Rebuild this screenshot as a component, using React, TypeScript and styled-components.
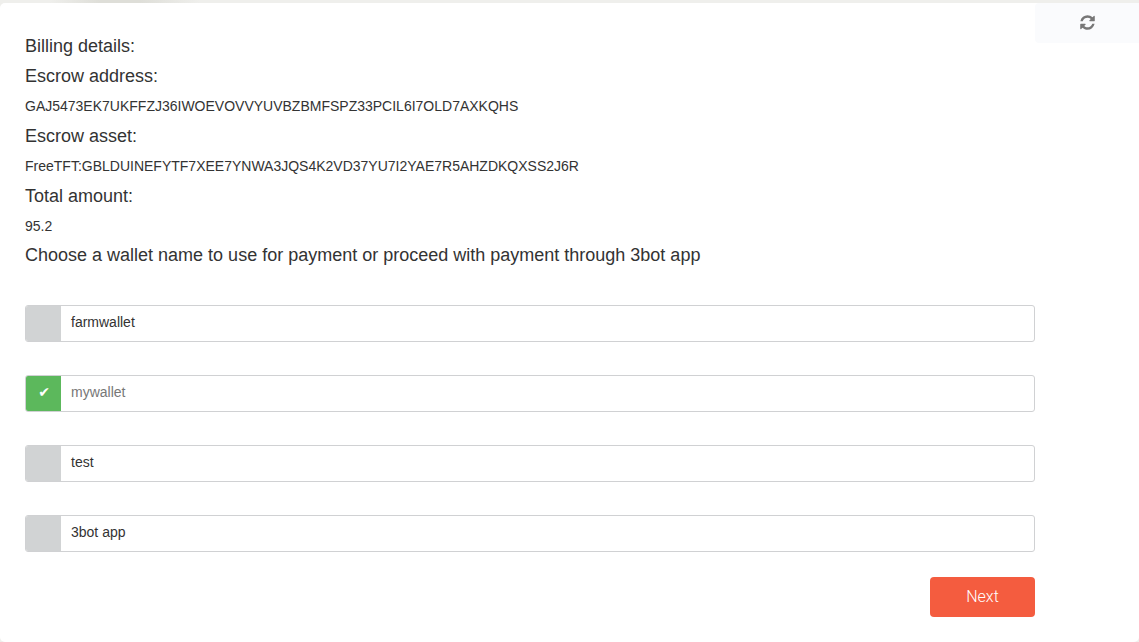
import React, { useState } from "react";
import styled, { createGlobalStyle } from "styled-components";

const GlobalStyle = createGlobalStyle`
  * { box-sizing: border-box; }
  body {
    margin: 0;
    background: #efefec;
    font-family: "Liberation Sans", Helvetica, Arial, sans-serif;
    color: #333333;
  }
`;

const Page = styled.div`
  padding-top: 3px;
  background: linear-gradient(90deg, #efefec 50px, #deded8 100px, #deded8 140px, #efefec 200px);
`;

const Card = styled.main`
  display: grid;
  grid-template-columns: minmax(0, 1fr) 104px;
  align-items: start;
  min-height: calc(100vh - 3px);
  padding-left: 25px;
  background: #ffffff;
  border-radius: 5px;
`;

const Form = styled.form`
  display: flex;
  flex-direction: column;
  padding: 28px 0 25px;
`;

const Details = styled.dl`
  margin: 0;
`;

const Term = styled.dt`
  font-size: 18px;
  line-height: 30px;
`;

const Value = styled.dd`
  margin: 0;
  font-size: 14px;
  line-height: 30px;
  overflow-wrap: anywhere;
`;

const Wallets = styled.fieldset`
  display: grid;
  gap: 33px;
  min-width: 0;
  margin: 0;
  padding: 0;
  border: 0;
`;

const Legend = styled.legend`
  margin-bottom: 36px;
  padding: 0;
  font-size: 18px;
  line-height: 28px;
`;

const Option = styled.label`
  display: flex;
  height: 37px;
  border: 1px solid #d0d1d3;
  border-radius: 3px;
  overflow: hidden;
  cursor: pointer;
`;

const Radio = styled.input`
  appearance: none;
  display: grid;
  place-items: center;
  flex: none;
  width: 35px;
  margin: 0;
  padding: 0 0 4px 1px;
  background: #d1d3d4;

  &:checked {
    background: #5cb85c;
  }

  &:checked::before {
    content: "✔";
    color: #ffffff;
    font: 14px/20px "DejaVu Sans", sans-serif;
  }
`;

const OptionName = styled.span<{ $selected: boolean }>`
  padding: 0 10px;
  font-size: 14px;
  line-height: 33px;
  color: ${(p) => (p.$selected ? "#777777" : "#333333")};
`;

const NextButton = styled.button`
  align-self: flex-end;
  width: 105px;
  height: 40px;
  margin-top: 25px;
  padding: 0;
  border: 0;
  border-radius: 4px;
  background: #f45c3f;
  color: #ffffff;
  font: 300 16px/40px Roboto, sans-serif;
  cursor: pointer;
`;

const RefreshButton = styled.button`
  display: flex;
  align-items: center;
  justify-content: center;
  height: 40px;
  padding: 0 0 2px;
  border: 0;
  border-radius: 4px 0 0 4px;
  background: #fafbfd;
  color: #777777;
  cursor: pointer;
`;

const RefreshIcon = () => (
  <svg width="17" height="17" viewBox="0 0 1792 1792" fill="currentColor" aria-hidden="true">
    <path d="M1639 1056q0 5-1 7-64 268-268 434.5t-478 166.5q-146 0-282.5-55t-243.5-157l-129 129q-19 19-45 19t-45-19-19-45v-448q0-26 19-45t45-19h448q26 0 45 19t19 45-19 45l-137 137q71 66 161 102t187 36q134 0 250-65t186-179q11-17 53-117 8-23 30-23h192q13 0 22.5 9.5t9.5 22.5zm25-800v448q0 26-19 45t-45 19h-448q-26 0-45-19t-19-45 19-45l138-138q-148-137-349-137-134 0-250 65t-186 179q-11 17-53 117-8 23-30 23h-199q-13 0-22.5-9.5t-9.5-22.5v-7q65-268 270-434.500t480-166.500q146 0 284 55.500t245 156.500l130-129q19-19 45-19t45 19 19 45z" />
  </svg>
);

const wallets = ["farmwallet", "mywallet", "test", "3bot app"];

export default function App() {
  const [selected, setSelected] = useState("mywallet");

  return (
    <Page>
      <GlobalStyle />
      <Card>
        <Form onSubmit={(e) => e.preventDefault()}>
          <Details>
            <Term as="div">Billing details:</Term>
            <Term>Escrow address:</Term>
            <Value>GAJ5473EK7UKFFZJ36IWOEVOVVYUVBZBMFSPZ33PCIL6I7OLD7AXKQHS</Value>
            <Term>Escrow asset:</Term>
            <Value>FreeTFT:GBLDUINEFYTF7XEE7YNWA3JQS4K2VD37YU7I2YAE7R5AHZDKQXSS2J6R</Value>
            <Term>Total amount:</Term>
            <Value>95.2</Value>
          </Details>
          <Wallets>
            <Legend>Choose a wallet name to use for payment or proceed with payment through 3bot app</Legend>
            {wallets.map((name) => (
              <Option key={name}>
                <Radio
                  type="radio"
                  name="wallet"
                  value={name}
                  checked={selected === name}
                  onChange={() => setSelected(name)}
                />
                <OptionName $selected={selected === name}>{name}</OptionName>
              </Option>
            ))}
          </Wallets>
          <NextButton type="submit">Next</NextButton>
        </Form>
        <RefreshButton type="button" aria-label="Refresh">
          <RefreshIcon />
        </RefreshButton>
      </Card>
    </Page>
  );
}
